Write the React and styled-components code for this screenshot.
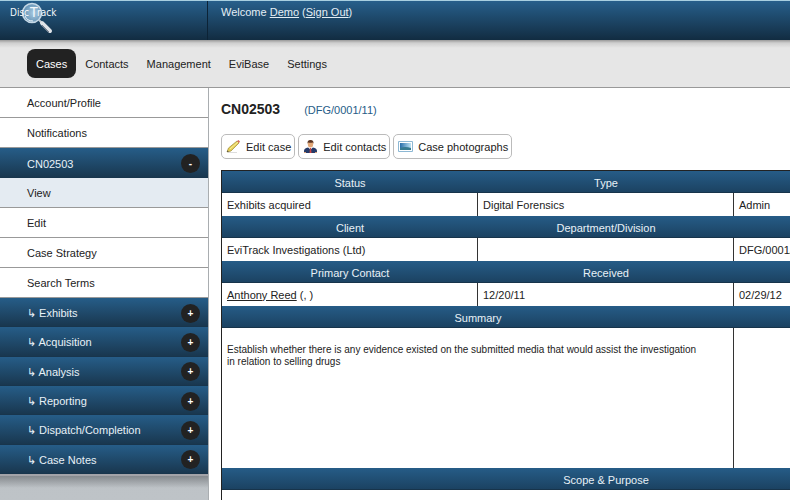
import React from "react";
import styled, { createGlobalStyle } from "styled-components";

const GlobalStyle = createGlobalStyle`
  *, *::before, *::after { box-sizing: border-box; }
  body {
    margin: 0;
    background: #fff;
    color: #222;
    font: 11px/12px "Liberation Sans", Arial, sans-serif;
  }
  a { color: inherit; }
`;

const blue = "linear-gradient(#265c87, #1b4160)";

const Shell = styled.div`
  display: flex;
  flex-direction: column;
  height: 100vh;
`;

const Header = styled.header`
  display: flex;
  height: 40px;
  flex-shrink: 0;
  border-top: 1px solid #a8cfe0;
  background: linear-gradient(#275f8b, #122c41);
  color: #e4eef5;
`;

const Brand = styled.a`
  display: block;
  width: 208px;
  padding-left: 8px;
  border-right: 1px solid #0c2336;
`;

const Welcome = styled.div`
  padding: 5px 13px;
`;

const Nav = styled.nav`
  display: flex;
  align-items: center;
  flex-shrink: 0;
  height: 48px;
  padding-left: 27px;
  border-bottom: 1px solid #999;
  background: linear-gradient(#999 0, #cfcfcf 3px, #e6e6e6 8px, #e6e6e6);
`;

const Tab = styled.a`
  padding: 9px 9px 8px;
  border-radius: 8px;
  background: ${(p) => (p.$active ? "#222" : "transparent")};
  color: ${(p) => (p.$active ? "#fff" : "#222")};
  text-decoration: none;
`;

const Body = styled.div`
  display: flex;
  flex: 1;
  min-height: 0;
`;

const Sidebar = styled.aside`
  display: flex;
  flex-direction: column;
  flex: 0 0 209px;
  border-right: 1px solid #a9adb0;
  background: linear-gradient(#b1b6ba, #bec3c7);
  overflow: hidden;
`;

const SideLink = styled.a`
  display: flex;
  align-items: center;
  flex-shrink: 0;
  height: 30px;
  padding-left: 27px;
  border-bottom: 1px solid #999;
  background: ${(p) => (p.$active ? "#e4ebf2" : "#fff")};
  color: #222;
  text-decoration: none;
`;

const Groups = styled.div`
  display: grid;
  grid-auto-rows: 1fr;
  flex-shrink: 0;
  height: 178px;
  border-bottom: 2px solid #a3a3a8;
`;

const Group = styled.div`
  display: flex;
  align-items: center;
  justify-content: space-between;
  flex-shrink: 0;
  min-height: ${(p) => (p.$open ? "30px" : "29px")};
  padding: 2px 8px 0 27px;
  border-bottom: 1px solid #18354c;
  background: linear-gradient(#265d88, #19374f);
  color: #e8f1f7;
`;

const Toggle = styled.button`
  width: 19px;
  height: 19px;
  padding: 0;
  border: 0;
  border-radius: 50%;
  background: #222;
  color: #fff;
  font: bold 10px/19px "Liberation Sans", Arial, sans-serif;
`;

const SideShade = styled.div`
  height: 12px;
  background: linear-gradient(#85898d, #b1b6ba00);
`;

const Main = styled.main`
  flex: 1;
  min-width: 0;
  padding: 13px 0 0 12px;
  overflow: auto;
  scrollbar-width: none;
`;

const TitleRow = styled.div`
  display: flex;
  align-items: baseline;
  gap: 24px;
`;

const Title = styled.h1`
  margin: 0;
  font-size: 14px;
  line-height: 16px;
`;

const CaseRef = styled.span`
  color: #265c87;
`;

const Actions = styled.div`
  display: flex;
  gap: 3px;
  margin: 17px 0 11px;
`;

const Action = styled.button`
  display: flex;
  align-items: center;
  gap: 5px;
  height: 25px;
  padding: 0 3px 0 4px;
  border: 1px solid #bbb;
  border-radius: 5px;
  background: #fff;
  color: #222;
  font: inherit;
`;

const CaseTable = styled.table`
  width: 100%;
  min-width: 769px;
  table-layout: fixed;
  border-collapse: separate;
  border-spacing: 0;
  border: 1px solid #222;
  border-right: 0;
`;

const HeadRow = styled.tr`
  background: ${blue};
`;

const Head = styled.th`
  height: 22px;
  padding: 2px 6px 0;
  border-bottom: 1px solid #17344b;
  color: #e8f1f7;
  font-weight: normal;
`;

const Cell = styled.td`
  height: 23px;
  padding: 0 5px;
  border-right: 1px solid #333;
`;

const NoteCell = styled(Cell)`
  height: 140px;
  padding: 16px 5px;
  font-size: 10px;
  vertical-align: top;
`;

const Logo = () => (
  <svg width="56" height="36" viewBox="0 0 56 36" role="img" aria-label="DiscTrack">
    <defs>
      <radialGradient id="lens" cx="60%" cy="50%">
        <stop offset="0" stopColor="#a9cbe2" />
        <stop offset="1" stopColor="#6a97b8" />
      </radialGradient>
    </defs>
    <path d="M31 19l4 4" stroke="#b9c3cb" strokeWidth="2" />
    <path d="M34 22l8 8" stroke="#dfe3e8" strokeWidth="4" strokeLinecap="round" />
    <path d="M34 24l7 7" stroke="#7c8290" strokeWidth="1" />
    <circle cx="24" cy="12" r="9.5" fill="url(#lens)" stroke="#c6d9e7" strokeWidth="1.5" />
    <path d="M17 15q2 5 8 5" stroke="#eef6fb" fill="none" />
    <g fill="#f4f8fb" fontFamily="DejaVu Sans Condensed, DejaVu Sans, sans-serif">
      <text x="2" y="15" fontSize="10">Disc</text>
      <text x="22" y="16" fontSize="14">T</text>
      <text x="29" y="15" fontSize="10">rack</text>
    </g>
  </svg>
);

const PencilIcon = () => (
  <svg width="15" height="15" viewBox="0 0 15 15" aria-hidden="true">
    <path d="M2 13.5h9" stroke="#ddd" />
    <path d="M1 13l1.500-4 8.500-7 2 2-8 8z" fill="#e6cf55" stroke="#9c8a3a" strokeWidth=".7" />
    <path d="M4 10l8-7" stroke="#f9efa0" />
    <path d="M11 2l1.500-1 1.500 1.500-1 1.500z" fill="#d76b5c" />
    <path d="M1 13l.7-1.500 1 1z" fill="#333" />
  </svg>
);

const PersonIcon = () => (
  <svg width="15" height="15" viewBox="0 0 15 15" aria-hidden="true">
    <path d="M1 14V12q0-3 4-3.500h5q4 .5 4 3.500v2z" fill="#263a68" />
    <path d="M5 8l2.500 3L10 8z" fill="#fff" />
    <path d="M7 9h1l.5 5h-2z" fill="#c44" />
    <ellipse cx="7.5" cy="5" rx="2.7" ry="3.5" fill="#e3a878" />
    <path d="M4.500 5Q4 1 7.500 1T10.500 5L10 3.500Q7 4 5 3.500z" fill="#5b3523" />
    <path d="M1 13.500h2M12 13.500h2" stroke="#d9a27c" />
  </svg>
);

const PhotoIcon = () => (
  <svg width="15" height="15" viewBox="0 0 15 15" aria-hidden="true">
    <defs>
      <linearGradient id="sky" x1="0" x2="1">
        <stop offset="0" stopColor="#276da8" />
        <stop offset="1" stopColor="#bde3f4" />
      </linearGradient>
    </defs>
    <path d="M.5 2.500h14v10H.5z" fill="#fff" stroke="#8db8d4" />
    <path d="M2 4h11v7H2z" fill="url(#sky)" />
    <path d="M2 9q5-2 11 0v2H2z" fill="#357a91" />
  </svg>
);

const actions = [
  ["Edit case", PencilIcon],
  ["Edit contacts", PersonIcon],
  ["Case photographs", PhotoIcon],
];

const details = [
  { heads: ["Status", "Type", ""], cells: ["Exhibits acquired", "Digital Forensics", "Admin"] },
  {
    heads: ["Client", "Department/Division", ""],
    cells: ["EviTrack Investigations (Ltd)", "", "DFG/0001/11"],
  },
  {
    heads: ["Primary Contact", "Received", ""],
    cells: [<><a href="#contact">Anthony Reed</a> (, )</>, "12/20/11", "02/29/12"],
  },
];

export default function App() {
  return (
    <Shell>
      <GlobalStyle />
      <Header>
        <Brand href="#home"><Logo /></Brand>
        <Welcome>
          Welcome <a href="#demo">Demo</a> (<a href="#signout">Sign Out</a>)
        </Welcome>
      </Header>
      <Nav>
        {["Cases", "Contacts", "Management", "EviBase", "Settings"].map((t, i) => (
          <Tab key={t} href={`#${t}`} $active={i === 0}>{t}</Tab>
        ))}
      </Nav>
      <Body>
        <Sidebar>
          {["Account/Profile", "Notifications"].map((t) => (
            <SideLink key={t} href={`#${t}`}>{t}</SideLink>
          ))}
          <Group $open>CN02503<Toggle aria-label="Collapse CN02503">-</Toggle></Group>
          {["View", "Edit", "Case Strategy", "Search Terms"].map((t, i) => (
            <SideLink key={t} href={`#${t}`} $active={i === 0}>{t}</SideLink>
          ))}
          <Groups>
            {["Exhibits", "Acquisition", "Analysis", "Reporting", "Dispatch/Completion", "Case Notes"].map((t) => (
              <Group key={t}>↳ {t}<Toggle aria-label={`Expand ${t}`}>+</Toggle></Group>
            ))}
          </Groups>
          <SideShade />
        </Sidebar>
        <Main>
          <TitleRow>
            <Title>CN02503</Title>
            <CaseRef>(DFG/0001/11)</CaseRef>
          </TitleRow>
          <Actions>
            {actions.map(([label, Icon]) => (
              <Action key={label}><Icon />{label}</Action>
            ))}
          </Actions>
          <CaseTable>
            <tbody>
              {details.map(({ heads, cells }) => (
                <React.Fragment key={heads[0]}>
                  <HeadRow>{heads.map((h, i) => <Head key={i}>{h}</Head>)}</HeadRow>
                  <tr>{cells.map((c, i) => <Cell key={i}>{c}</Cell>)}</tr>
                </React.Fragment>
              ))}
              <HeadRow><Head colSpan={2}>Summary</Head><Head /></HeadRow>
              <tr>
                <NoteCell colSpan={2}>
                  Establish whether there is any evidence existed on the submitted media that would
                  assist the investigation<br />in relation to selling drugs
                </NoteCell>
                <NoteCell />
              </tr>
              <HeadRow><Head colSpan={3}>Scope &amp; Purpose</Head></HeadRow>
              <tr><NoteCell colSpan={3} /></tr>
            </tbody>
          </CaseTable>
        </Main>
      </Body>
    </Shell>
  );
}
